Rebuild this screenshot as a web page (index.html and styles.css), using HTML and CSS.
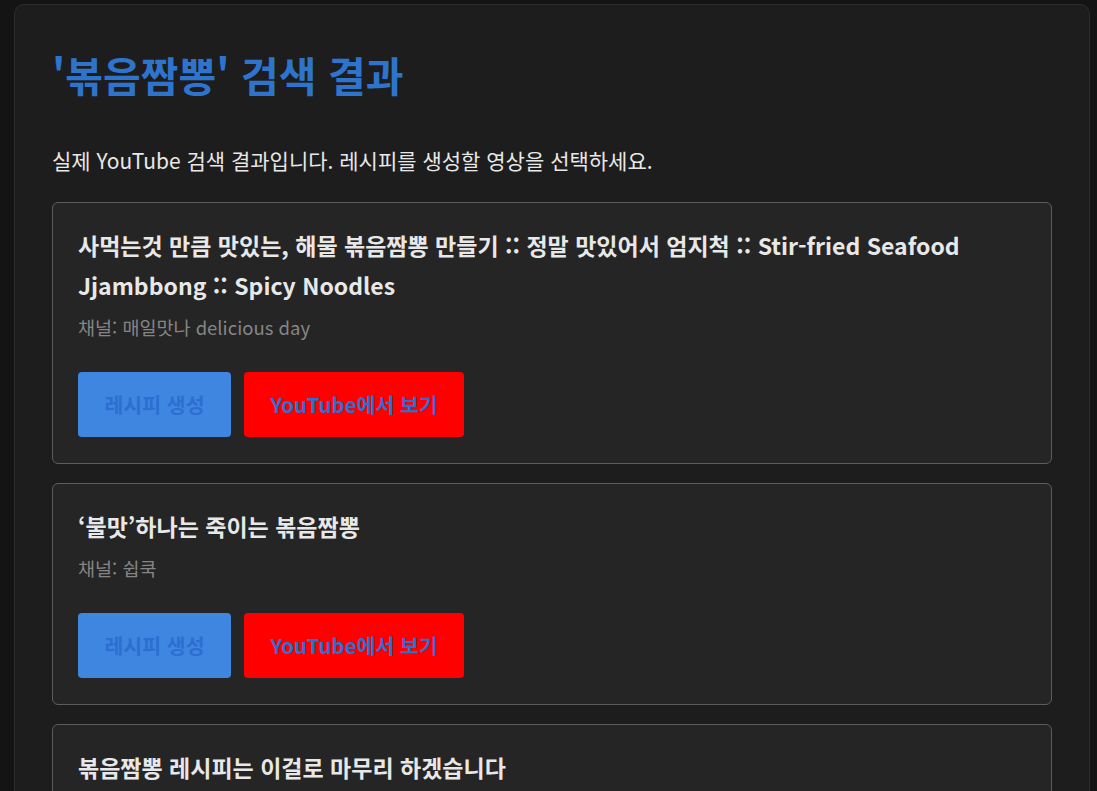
FILE: index.html
```html
<!DOCTYPE html>
<html lang="ko">
<head>
    <meta charset="UTF-8">
    <meta name="viewport" content="width=device-width, initial-scale=1.0">
    <title>검색 결과</title>
    <link rel="stylesheet" href="styles.css">
</head>
<body>

    <div class="container">
        <h1 class="page-title">'볶음짬뽕' 검색 결과</h1>
        <p class="intro">실제 YouTube 검색 결과입니다. 레시피를 생성할 영상을 선택하세요.</p>

        <div class="results">
            <!-- Result 1 -->
            <div class="video-card">
                <h3 class="video-title">사먹는것 만큼 맛있는, 해물 볶음짬뽕 만들기 :: 정말 맛있어서 엄지척 :: Stir-fried Seafood Jjambbong :: Spicy Noodles</h3>
                <p class="channel">채널: 매일맛나 delicious day</p>
                <div class="actions">
                    <button class="btn btn-recipe">레시피 생성</button>
                    <button class="btn btn-youtube">YouTube에서 보기</button>
                </div>
            </div>

            <!-- Result 2 -->
            <div class="video-card">
                <h3 class="video-title">‘불맛’하나는 죽이는 볶음짬뽕</h3>
                <p class="channel">채널: 쉽쿡</p>
                <div class="actions">
                    <button class="btn btn-recipe">레시피 생성</button>
                    <button class="btn btn-youtube">YouTube에서 보기</button>
                </div>
            </div>

            <!-- Result 3 (rest runs below the fold) -->
            <div class="video-card video-card-last">
                <h3 class="video-title">볶음짬뽕 레시피는 이걸로 마무리 하겠습니다</h3>
            </div>
        </div>
    </div>

</body>
</html>
```

FILE: styles.css
```css
/* General Styles */
body {
    font-family: "Noto Sans CJK KR", "Noto Sans", sans-serif;
    margin: 0;
    padding: 4px 7px 0 14px;
    background-color: #141414;
    color: #e6e6e6;
}

.container {
    background: #1d1d1d;
    border: 1px solid #2c2c2c;
    border-bottom: none;
    border-radius: 10px 10px 0 0;
    padding: 39px 37px 40px;
}

.page-title {
    color: #2f74cc;
    font-size: 41px;
    font-weight: bold;
    margin: 0 0 39px;
    line-height: 1.5;
}

.intro {
    font-size: 21px;
    margin: 0 0 26px;
    line-height: 1.5;
    color: #e8e8e8;
}

/* Result Cards */
.results {
    display: flex;
    flex-direction: column;
    gap: 19px;
}

.video-card {
    background: #252525;
    border: 1px solid #5c5c5c;
    border-radius: 6px;
    padding: 22px 25px 26px;
}

.video-card-last {
    padding-bottom: 180px;
}

.video-title {
    font-size: 23px;
    font-weight: bold;
    line-height: 40px;
    margin: 0 0 9px;
    color: #e8e8e8;
}

.channel {
    font-size: 18.5px;
    color: #858585;
    margin: 0 0 30px;
    line-height: 1.5;
}

.actions {
    display: flex;
    gap: 13px;
}

.btn {
    font-family: inherit;
    font-size: 20.5px;
    font-weight: bold;
    color: #2d6fd0;
    border: none;
    border-radius: 4px;
    height: 65px;
    padding: 0 26.5px;
    cursor: pointer;
}

.btn-recipe {
    background: #3f86e0;
}

.btn-youtube {
    background: #ff0000;
}
```
